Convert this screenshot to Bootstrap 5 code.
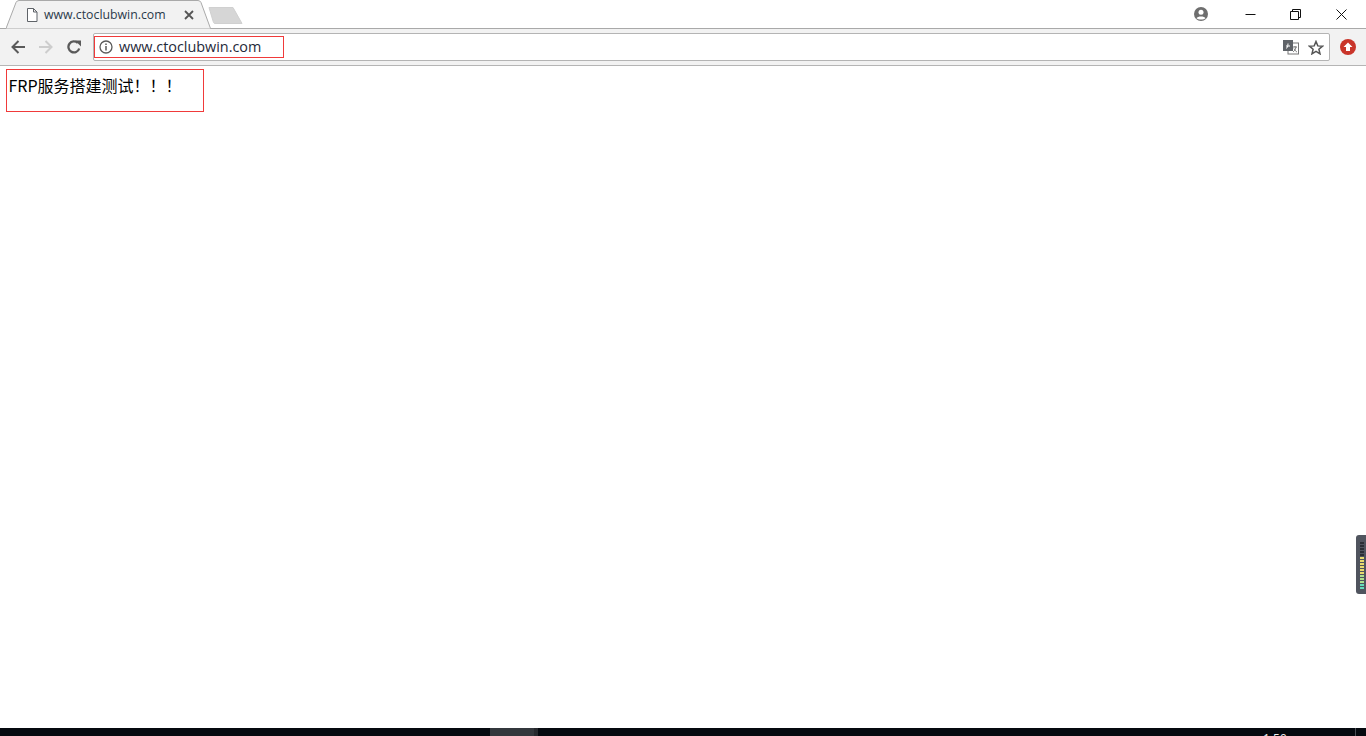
<!DOCTYPE html>
<html lang="zh">
<head>
<meta charset="utf-8">
<title>www.ctoclubwin.com</title>
<link href="https://cdn.jsdelivr.net/npm/bootstrap@5.3.0/dist/css/bootstrap.min.css" rel="stylesheet">
<style>
html,body{height:736px;overflow:hidden;background:#fff}
body{font-family:"Open Sans","Noto Sans CJK SC",sans-serif;color:#000}
.app{height:736px}
.strip{height:29px;border-bottom:1px solid #a9a9a9;background:#fff}
.tab{width:205px;height:29px;margin-left:6px;padding-left:20px;color:#2b3a4a;font-size:12.3px}
.tabshape{left:0;top:0}
.tabinner{z-index:1;height:29px}
.tabtitle{margin-left:6px;width:140px;white-space:nowrap;padding-top:2px}
.newtab{margin-left:-5px;margin-top:6px}
.winbtns{height:28px;padding-right:2px}
.avatar{margin-right:20px}
.winbtn{width:45.500px}
.toolbar{height:37px;background:#f2f2f2;border-bottom:1px solid #b5b5b5;padding-left:11px}
.navico{margin-right:14px}
.omni{width:1237px;height:28px;margin-left:-2px;background:#fff;border:1px solid #b4b4b4;border-radius:2px;padding-right:5px}
.urlbox{width:190px;height:22px;border:1px solid #f03a3a;padding-left:4px;font-size:14.400px;color:#1f2a3a;white-space:nowrap}
.urltext{margin-left:6px}
.tools{gap:9px}
.ext{margin-left:10px}
.pagebody{flex:1 1 auto;padding:3px 0 0 6px}
.probe{width:198px;height:43px;border:1px solid #f03a3a;padding-left:1.500px;font:16px/30px "Noto Sans CJK SC",sans-serif;white-space:nowrap}
.taskbar{height:8px;background:#05090f;color:#f2f2f2;font-size:12px;overflow:hidden}
.tbleft{width:490px}
.tbactive{width:44px;background:#33373c}
.tbedge{width:4px;background:#26292e}
.clock{margin-left:725px;line-height:14px;padding-top:4px;font-family:"Open Sans",sans-serif}
.tbline{width:1px;background:#4a4e54;margin-left:auto;margin-right:10px}
.meter{right:0;top:535px;width:10px;height:59px;background:#50545e;border-radius:3px 0 0 3px;padding:7px 2px 0 4px;gap:1px}
.meter span{display:block;height:2px;background:#2b2e35;flex:none}
.meter span.y{background:#e8da6e}
.meter span.g{background:#aee08e}
.meter span.t{background:#66dcbc}
</style>
</head>
<body>
<div class="app d-flex flex-column position-relative">
  <div class="strip d-flex align-items-start">
    <div class="tab position-relative flex-shrink-0">
      <svg class="tabshape position-absolute" width="205" height="29" viewBox="0 0 205 29"><path d="M0 28.5 L10 2.5 Q11 .5 13 .5 L192 .5 Q194 .5 195 2.5 L204.5 28.5" fill="#f2f2f2" stroke="#a9a9a9"/></svg>
      <div class="tabinner d-flex align-items-center position-relative">
        <svg width="12" height="14" viewBox="0 0 12 14"><path d="M1.5 .5H7.5L11 4V13.500H1.500Z M7.500 .5V4H11" fill="#fff" stroke="#5f6368"/></svg>
        <span class="tabtitle">www.ctoclubwin.com</span>
        <svg width="10" height="10" viewBox="0 0 10 10"><path d="M1 1L9 9M9 1L1 9" stroke="#555" stroke-width="1.800"/></svg>
      </div>
    </div>
    <svg class="newtab flex-shrink-0" width="37" height="19" viewBox="0 0 37 19"><path d="M3 1.500H27L36 17.500H9Q8 17.500 7.500 16.500Z" fill="#d6d6d6" stroke="#d0d0d0"/></svg>
    <div class="winbtns ms-auto d-flex align-items-center">
      <svg class="avatar" width="14" height="14" viewBox="0 0 14 14"><circle cx="7" cy="7" r="7" fill="#6e6e6e"/><circle cx="7" cy="5.300" r="2.500" fill="#fff"/><path d="M2.500 11.200C3.500 8.800 10.500 8.800 11.500 11.200C10 13 4 13 2.500 11.200Z" fill="#fff"/></svg>
      <div class="winbtn d-flex justify-content-center"><svg width="11" height="11" viewBox="0 0 11 11"><path d="M.5 5.500H10.500" stroke="#111"/></svg></div>
      <div class="winbtn d-flex justify-content-center"><svg width="11" height="11" viewBox="0 0 11 11"><path d="M.5 2.500H8.500V10.500H.5ZM2.500 2.500V.5H10.500V8.500H8.500" fill="none" stroke="#111"/></svg></div>
      <div class="winbtn d-flex justify-content-center"><svg width="11" height="11" viewBox="0 0 11 11"><path d="M.5 .5L10.500 10.500M10.500 .5L.5 10.500" stroke="#111"/></svg></div>
    </div>
  </div>
  <div class="toolbar d-flex align-items-center">
    <svg class="navico" width="14" height="14" viewBox="0 0 14 14"><path d="M14 7H2M7.500 1L1.500 7L7.500 13" fill="none" stroke="#5a5a5a" stroke-width="2"/></svg>
    <svg class="navico" width="14" height="14" viewBox="0 0 14 14"><path d="M0 7H12M6.500 1L12.500 7L6.500 13" fill="none" stroke="#cdcdcd" stroke-width="2"/></svg>
    <svg class="navico" width="14" height="14" viewBox="0 0 14 14"><path d="M12.200 8.500A5.500 5.500 0 1 1 10.800 3" fill="none" stroke="#5a5a5a" stroke-width="2.300"/><path d="M8 0H14V6Z" fill="#5a5a5a" transform="translate(0 .5)"/></svg>
    <div class="omni d-flex align-items-center">
      <div class="urlbox d-flex align-items-center">
        <svg width="14" height="14" viewBox="0 0 14 14"><circle cx="7" cy="7" r="6" fill="none" stroke="#5a5a5a" stroke-width="1.300"/><path d="M7 6V10.500M7 3.500V5" stroke="#5a5a5a" stroke-width="1.500"/></svg>
        <span class="urltext">www.ctoclubwin.com</span>
      </div>
      <div class="tools ms-auto d-flex align-items-center">
        <svg width="16" height="15" viewBox="0 0 16 15"><rect x="5" y="3" width="10.500" height="11" fill="#fff" stroke="#777"/><rect width="10" height="11" fill="#5f6368"/><path d="M3 6H7M5 3.500C5 7 4 8 3 8.500" stroke="#fff" fill="none"/><path d="M10 7H14M12 6V7M13 7C12.500 10 11 11 10 12M11 8.500C11.500 10 13 11.500 14 12" stroke="#777" fill="none"/></svg>
        <svg width="16" height="15" viewBox="0 0 16 15"><path d="M8 1.500L9.800 5.900L14.500 6.200L10.900 9.200L12 13.800L8 11.300L4 13.800L5.100 9.200L1.500 6.200L6.200 5.900Z" fill="none" stroke="#555" stroke-width="1.500"/></svg>
      </div>
    </div>
    <svg class="ext" width="16" height="16" viewBox="0 0 16 16"><circle cx="8" cy="8" r="8" fill="#c9352a"/><path d="M8 3.500L12.500 8H10V12H6V8H3.500Z" fill="#fff"/></svg>
  </div>
  <div class="pagebody">
    <div class="probe">FRP服务搭建测试！！！</div>
  </div>
  <div class="taskbar d-flex">
    <div class="tbleft"></div>
    <div class="tbactive"></div>
    <div class="tbedge"></div>
    <div class="clock">1:50</div>
    <div class="tbline"></div>
  </div>
  <div class="meter position-absolute d-flex flex-column">
    <span></span><span></span><span></span><span></span><span></span>
    <span class="y"></span><span class="y"></span><span class="y"></span><span class="y"></span><span class="y"></span><span class="y"></span>
    <span class="g"></span><span class="g"></span><span class="g"></span>
    <span class="t"></span><span class="t"></span>
  </div>
</div>
<script src="https://cdn.jsdelivr.net/npm/bootstrap@5.3.0/dist/js/bootstrap.bundle.min.js"></script>
</body>
</html>
